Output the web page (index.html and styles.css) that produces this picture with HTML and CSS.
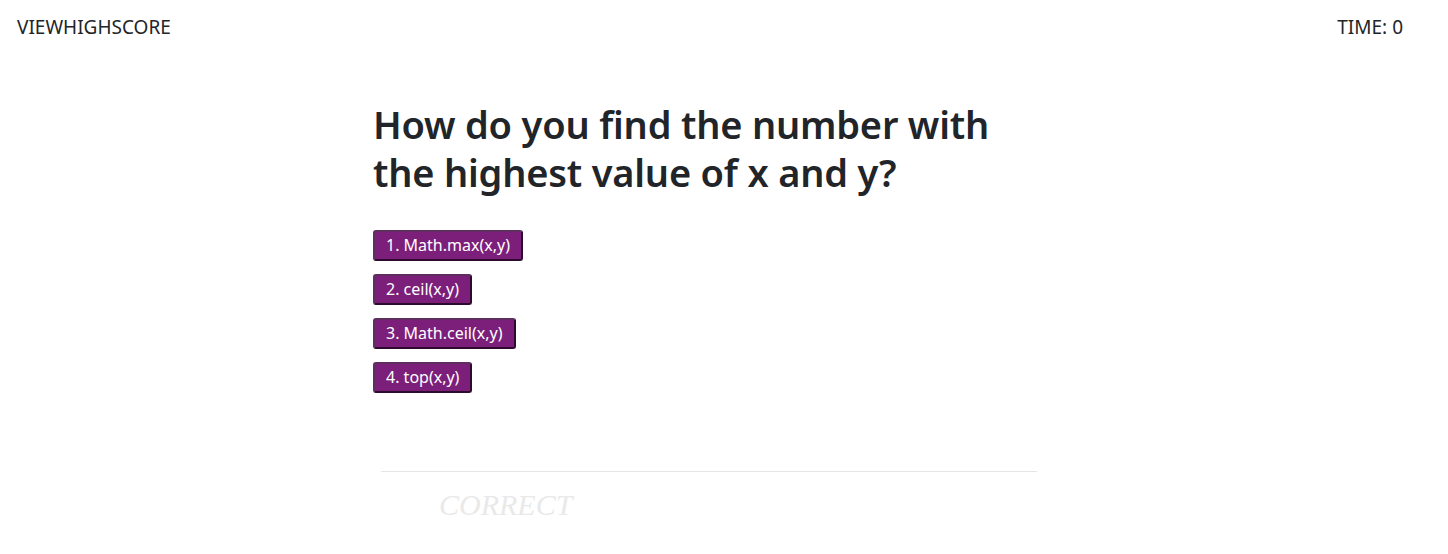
FILE: index.html
```html
<!DOCTYPE html>
<html lang="en">
<head>
<meta charset="utf-8">
<title>Quiz</title>
<link rel="stylesheet" href="styles.css">
</head>
<body>
<header class="topbar">
  <a class="highscore">VIEWHIGHSCORE</a>
  <span class="timer">TIME: 0</span>
</header>
<main class="quiz">
  <h1 class="question">How do you find the number with the highest value of x and y?</h1>
  <div class="choices">
    <button class="choice">1. Math.max(x,y)</button>
    <button class="choice">2. ceil(x,y)</button>
    <button class="choice">3. Math.ceil(x,y)</button>
    <button class="choice">4. top(x,y)</button>
  </div>
  <hr class="divider">
  <p class="result">CORRECT</p>
</main>
</body>
</html>
```

FILE: styles.css
```css
* { box-sizing: border-box; }
html, body { margin: 0; padding: 0; background: #fff; }
body {
  font-family: "Noto Sans", "Open Sans", sans-serif;
  font-size: 16px;
  line-height: 24px;
  color: #212529;
}
.topbar {
  display: flex;
  justify-content: space-between;
  align-items: center;
  padding: 0 45px 0 17px;
  height: 54px;
}
.highscore, .timer { color: #212529; font-size: 19px; line-height: 24px; }
.quiz {
  width: 670px;
  margin: 46px 0 0 373px;
}
.question {
  margin: 0 0 34px 0;
  font-size: 38px;
  font-weight: 600;
  line-height: 48px;
  letter-spacing: -0.2px;
}
.choices {
  display: flex;
  flex-direction: column;
  align-items: flex-start;
  gap: 13px;
}
.choice {
  font-family: inherit;
  font-size: 16px;
  line-height: 21px;
  color: #fff;
  background: #7b1f7b;
  border: 2px solid #2e0b2e;
  border-top-color: #5e2e5e;
  border-left-color: #5e2e5e;
  border-radius: 3px;
  padding: 3px 11px 3px 11px;
  height: 31px;
}
.divider {
  margin: 78px 0 0 8px;
  border: 0;
  border-top: 1px solid #e6e6e6;
  width: 656px;
}
.result {
  margin: 15px 0 0 66px;
  font-family: "Liberation Serif", serif;
  font-style: italic;
  font-size: 30px;
  line-height: 36px;
  color: #e9e9e9;
}
```
